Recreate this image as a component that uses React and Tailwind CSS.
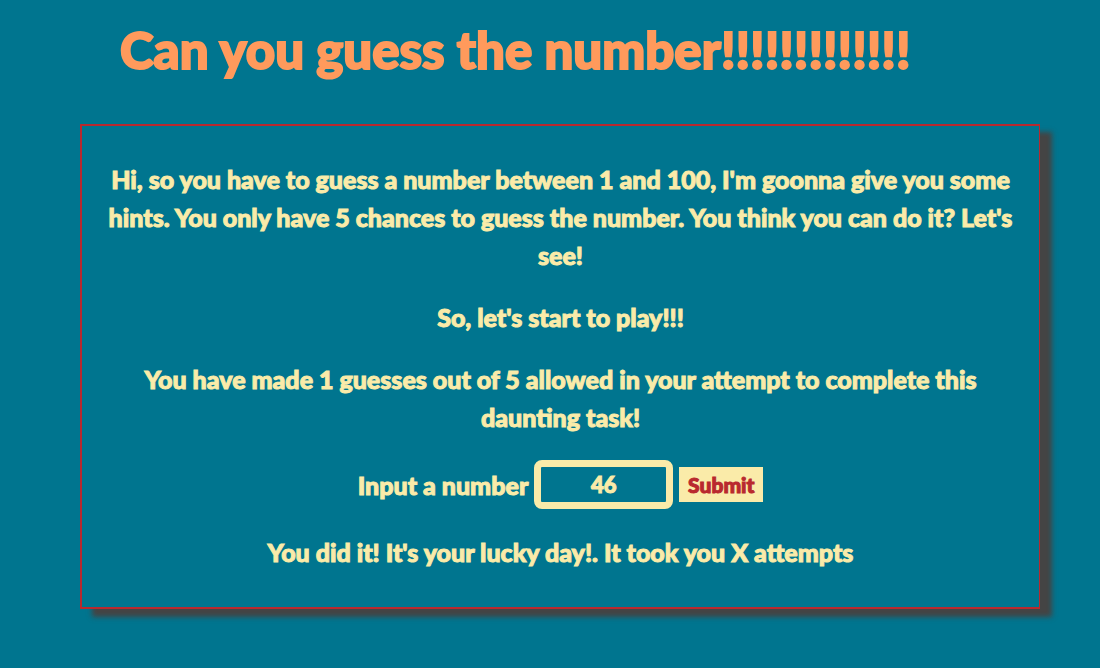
import { useState } from "react";

export default function App() {
  const [guess, setGuess] = useState("46");

  return (
    <div className="min-h-screen bg-[#00758f] pr-15 pb-14 pl-20 font-['Lato',sans-serif] font-black text-[#faeba9] [-webkit-text-stroke:1px_currentColor]">
      <h1 className="h-31 pt-5 pl-10 text-[51px] leading-[60px] whitespace-nowrap text-[#ff9a5c] [-webkit-text-stroke:2px_currentColor]">
        Can you guess the number!!!!!!!!!!!!!
      </h1>
      <main className="flex flex-col gap-6 border-2 border-r border-[#b9292e] px-6 pt-[34px] pb-9 text-center text-[25px] leading-[38px] shadow-[12px_8px_5px_#444]">
        <p>
          Hi, so you have to guess a number between 1 and 100, I'm goonna give you some
          hints. You only have 5 chances to guess the number. You think you can do it? Let's
          see!
        </p>
        <p>So, let's start to play!!!</p>
        <p className="px-8">
          You have made 1 guesses out of 5 allowed in your attempt to complete this
          daunting task!
        </p>
        <form
          className="flex items-center justify-center gap-1.5"
          onSubmit={(event) => event.preventDefault()}
        >
          <label htmlFor="guess">Input a number</label>
          <input
            id="guess"
            type="text"
            inputMode="numeric"
            value={guess}
            onChange={(event) => setGuess(event.target.value)}
            className="h-[49px] w-[139px] rounded-lg border-[7px] border-[#faeba9] bg-transparent text-center text-[22px] outline-none"
          />
          <button type="submit" className="h-[35px] w-21 bg-[#faeba9] text-[21px] leading-[35px] text-[#b9292e]">
            Submit
          </button>
        </form>
        <p>You did it! It's your lucky day!. It took you X attempts</p>
      </main>
    </div>
  );
}
